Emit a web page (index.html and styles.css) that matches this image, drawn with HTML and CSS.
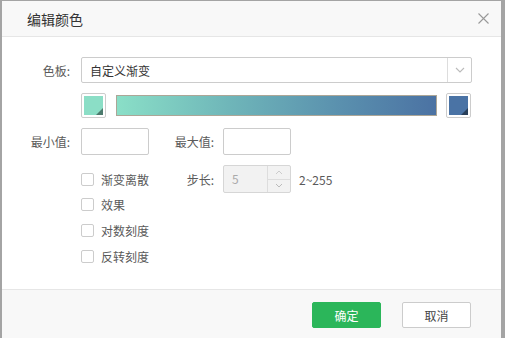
FILE: index.html
```html
<!DOCTYPE html>
<html>
<head>
<meta charset="utf-8">
<title>编辑颜色</title>
<link rel="stylesheet" href="styles.css">
</head>
<body>

<div class="dialog">

   <div class="dlg-head">
      <span class="dlg-title">编辑颜色</span>
      <svg class="dlg-close" width="11" height="11" viewBox="0 0 11 11">
         <path d="M0.5 0.5 L10.5 10.5 M10.5 0.5 L0.5 10.5" stroke="#999" stroke-width="1.1" fill="none"/>
      </svg>
   </div>

   <div class="dlg-body">

      <div class="row">
         <label class="lbl">色板:</label>
         <div class="select">
            <span class="select-text">自定义渐变</span>
            <span class="select-btn">
               <svg width="10" height="6" viewBox="0 0 10 6"><path d="M1 1 L5 5 L9 1" stroke="#bbb" stroke-width="1.1" fill="none"/></svg>
            </span>
         </div>
      </div>

      <div class="row row-grad">
         <div class="swatch"><span class="swatch-fill start"></span></div>
         <div class="grad-bar"></div>
         <div class="swatch"><span class="swatch-fill end"></span></div>
      </div>

      <div class="row">
         <label class="lbl">最小值:</label>
         <input class="txt" type="text">
         <label class="lbl lbl2">最大值:</label>
         <input class="txt" type="text">
      </div>

      <div class="row row-step">
         <span class="indent"></span>
         <label class="check check-fixed"><span class="box"></span>渐变离散</label>
         <label class="lbl lbl2">步长:</label>
         <div class="spinner">
            <span class="spin-val">5</span>
            <span class="spin-btns">
               <span class="spin-up"><svg width="8" height="5" viewBox="0 0 8 5"><path d="M1 4 L4 1 L7 4" stroke="#ccc" stroke-width="1" fill="none"/></svg></span>
               <span class="spin-down"><svg width="8" height="5" viewBox="0 0 8 5"><path d="M1 1 L4 4 L7 1" stroke="#bbb" stroke-width="1" fill="none"/></svg></span>
            </span>
         </div>
         <span class="range">2~255</span>
      </div>

      <div class="row row-check">
         <span class="indent"></span>
         <label class="check"><span class="box"></span>效果</label>
      </div>
      <div class="row row-check">
         <span class="indent"></span>
         <label class="check"><span class="box"></span>对数刻度</label>
      </div>
      <div class="row row-check">
         <span class="indent"></span>
         <label class="check"><span class="box"></span>反转刻度</label>
      </div>

   </div>

   <div class="dlg-foot">
      <button class="btn btn-ok">确定</button>
      <button class="btn btn-cancel">取消</button>
   </div>

</div>

</body>
</html>
```

FILE: styles.css
```css
html , body {
   margin:0px;
   padding:0px;
   width:100%;
   height:100%;
}

body {
   background:#a4a4a4;
   font-family:"Noto Sans CJK SC", "Noto Sans", sans-serif;
   font-size:12px;
   color:#5a5a5a;
   overflow:hidden;
}

.dialog {
   margin:1px 0px 0px 2px;
   width:499px;
   height:337px;
   background:white;
   display:flex;
   flex-direction:column;
}

/* header */

.dlg-head {
   height:35px;
   background:#f8f8f8;
   border-bottom:1px solid #e6e6e6;
   display:flex;
   align-items:center;
   justify-content:space-between;
   padding:0px 12px 0px 25px;
}

.dlg-title {
   font-size:14px;
   color:#333;
}

.dlg-close {
   display:block;
}

/* body */

.dlg-body {
   flex:1;
   padding:20px 0px 0px 0px;
}

.row {
   display:flex;
   align-items:center;
   margin-bottom:10px;
}

.lbl {
   width:68px;
   margin-right:11px;
   text-align:right;
}

.lbl2 {
   width:55px;
   margin-left:10px;
   margin-right:9px;
}

.indent {
   width:79px;
   flex:none;
}

.select {
   width:391px;
   height:26px;
   box-sizing:border-box;
   border:1px solid #ccc;
   border-radius:2px;
   display:flex;
   align-items:center;
}

.select-text {
   flex:1;
   padding-left:8px;
   color:#333;
}

.select-btn {
   width:23px;
   height:100%;
   border-left:1px solid #ddd;
   display:flex;
   align-items:center;
   justify-content:center;
}

.row-grad {
   padding-left:79px;
}

.swatch {
   width:25px;
   height:25px;
   box-sizing:border-box;
   border:1px solid #ccc;
   border-radius:2px;
   padding:2px;
   flex:none;
}

.swatch-fill {
   display:block;
   width:100%;
   height:100%;
   position:relative;
   overflow:hidden;
}

.swatch-fill::after {
   content:"";
   position:absolute;
   right:0px;
   bottom:0px;
   border-style:solid;
   border-width:0px 0px 7px 7px;
   border-color:transparent transparent rgba(0,0,0,0.45) transparent;
}

.swatch-fill.start {
   background:#8bdec6;
}

.swatch-fill.end {
   background:#4a73a5;
}

.grad-bar {
   width:321px;
   height:21px;
   box-sizing:border-box;
   margin:0px 9px 0px 10px;
   border:1px solid #aca697;
   background:linear-gradient(to right, #8adfc7, #6fb6b9 35%, #5a90ae 70%, #4b72a3);
}

.txt {
   width:68px;
   height:27px;
   box-sizing:border-box;
   border:1px solid #ccc;
   border-radius:2px;
   margin:0px;
   padding:0px 6px;
   outline:none;
}

.row-step {
   margin-bottom:1px;
}

.check {
   display:flex;
   align-items:center;
}

.check-fixed {
   width:68px;
}

.box {
   width:13px;
   height:13px;
   box-sizing:border-box;
   border:1px solid #ccc;
   border-radius:2px;
   margin-right:7px;
}

.row-check {
   height:20px;
   margin-bottom:6px;
}

.spinner {
   width:68px;
   height:28px;
   box-sizing:border-box;
   border:1px solid #d6d6d6;
   border-radius:2px;
   background:#f2f2f2;
   display:flex;
}

.spin-val {
   flex:1;
   padding-left:8px;
   line-height:26px;
   color:#aaa;
}

.spin-btns {
   width:22px;
   border-left:1px solid #ddd;
   display:flex;
   flex-direction:column;
}

.spin-up , .spin-down {
   flex:1;
   display:flex;
   align-items:center;
   justify-content:center;
}

.spin-up {
   border-bottom:1px solid #ddd;
}

.range {
   margin-left:8px;
}

/* footer */

.dlg-foot {
   height:49px;
   box-sizing:border-box;
   background:#f8f8f8;
   border-top:1px solid #e6e6e6;
   display:flex;
   justify-content:flex-end;
   align-items:flex-start;
   padding:12px 30px 0px 0px;
}

.btn {
   width:69px;
   height:26px;
   border-radius:2px;
   font-family:"Noto Sans CJK SC", sans-serif;
   font-size:12px;
   padding:0px;
   cursor:pointer;
}

.btn-ok {
   background:#2bb65a;
   border:1px solid #2bb65a;
   color:white;
}

.btn-cancel {
   margin-left:21px;
   background:white;
   border:1px solid #ccc;
   color:#444;
}
```
